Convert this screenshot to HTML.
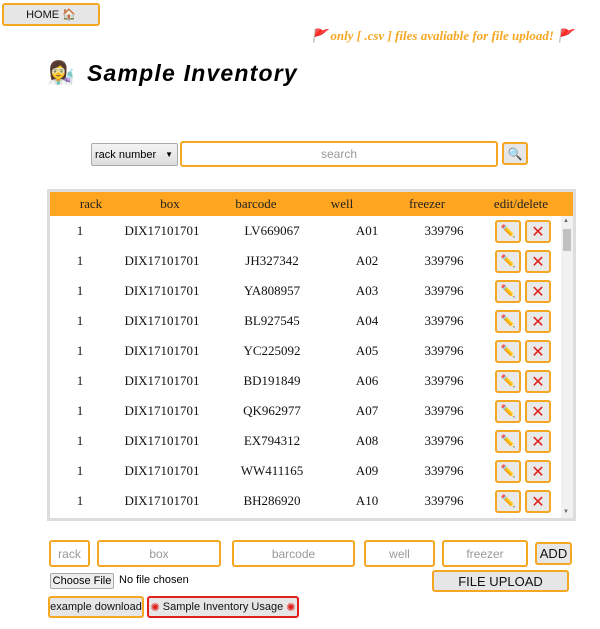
<!DOCTYPE html><html><head><style>
*{box-sizing:border-box}body{margin:0;width:600px;height:629px;background:#fff;font-family:"Liberation Sans",sans-serif;position:relative;overflow:hidden}
.a{position:absolute}
.btn{position:absolute;background:#e6e6e6;border:2px solid #f5a623;border-radius:3px;font-size:12px;display:flex;align-items:center;justify-content:center;color:#111;white-space:nowrap}
.inp{position:absolute;border:2px solid #f5a623;border-radius:3px;color:#999;font-size:12px;display:flex;align-items:center;justify-content:center;background:#fff}
.r{position:absolute;left:0;width:511px;height:30px;font-family:"Liberation Serif",serif;font-size:13px;color:#111}
.r span{position:absolute;top:50%;transform:translate(-50%,-50%);white-space:nowrap}
.h{height:24px;color:#222}
.e,.d{position:absolute;top:4px;width:26px;height:23px;border:2px solid #f5a623;border-radius:3px;background:#e9e9e9;font-size:12px;text-align:center;line-height:19px}
.d{color:#e0201a;font-weight:bold;font-family:"DejaVu Sans",sans-serif;font-size:16px}
</style></head><body>
<div class="btn" style="left:2px;top:3px;width:98px;height:23px;font-size:11px">HOME 🏠</div>
<div class="a" style="left:311px;top:28px;font-family:'Liberation Serif',serif;font-style:italic;font-weight:bold;color:#f5a623;font-size:13px">🚩 only [ .csv ] files avaliable for file upload! 🚩</div>
<div class="a" style="left:47px;top:60px;font-size:22px">👩‍🔬</div>
<div class="a" style="left:87px;top:60px;font-size:23px;font-weight:bold;font-style:italic;letter-spacing:1.2px">Sample Inventory</div>
<div class="a" style="left:91px;top:143px;width:87px;height:23px;border:1px solid #aaa;border-radius:2px;background:linear-gradient(#f4f4f4,#ddd);font-size:11px;padding:5px 3px">rack number<span style="position:absolute;right:4px;font-size:8px;top:6px">▼</span></div>
<div class="inp" style="left:180px;top:141px;width:318px;height:26px">search</div>
<div class="btn" style="left:502px;top:142px;width:26px;height:23px">🔍</div>
<div class="a" style="left:47px;top:189px;width:529px;height:332px;border:3px solid #ddd;overflow:hidden">
<div class="a" style="left:0;top:0;width:523px;height:24px;background:#ffa51f"></div>
<div class="r h" style="top:0"><span style="left:41px">rack</span><span style="left:120px">box</span><span style="left:206px">barcode</span><span style="left:292px">well</span><span style="left:377px">freezer</span><span style="left:471px">edit/delete</span></div>
<div id="rows"></div>
<div class="a" style="left:511px;top:24px;width:12px;height:302px;background:#f1f1f1"></div>
<div class="a" style="left:513px;top:37px;width:8px;height:22px;background:#c1c1c1"></div>
<div class="a" style="left:513px;top:26px;font-size:6px;color:#666">▲</div>
<div class="a" style="left:513px;top:317px;font-size:6px;color:#666">▼</div>
</div>
<div class="inp" style="left:49px;top:540px;width:41px;height:27px">rack</div>
<div class="inp" style="left:97px;top:540px;width:124px;height:27px">box</div>
<div class="inp" style="left:232px;top:540px;width:123px;height:27px">barcode</div>
<div class="inp" style="left:364px;top:540px;width:71px;height:27px">well</div>
<div class="inp" style="left:442px;top:540px;width:86px;height:27px">freezer</div>
<div class="btn" style="left:535px;top:542px;width:37px;height:23px;font-size:13px">ADD</div>
<div class="a" style="left:50px;top:573px;width:64px;height:16px;border:1px solid #aaa;border-radius:2px;background:#eee;font-size:11px;text-align:center;line-height:14px">Choose File</div>
<div class="a" style="left:119px;top:574px;font-size:11px">No file chosen</div>
<div class="btn" style="left:432px;top:570px;width:137px;height:22px;font-size:13px">FILE UPLOAD</div>
<div class="btn" style="left:48px;top:596px;width:96px;height:22px;font-size:11px">example download</div>
<div class="btn" style="left:147px;top:596px;width:152px;height:22px;font-size:11px;border-color:#e0201a"><span style="color:#e0201a">✺</span>&nbsp;Sample Inventory Usage&nbsp;<span style="color:#e0201a">✺</span></div>
<script>
var d=[["LV669067","A01"],["JH327342","A02"],["YA808957","A03"],["BL927545","A04"],["YC225092","A05"],["BD191849","A06"],["QK962977","A07"],["EX794312","A08"],["WW411165","A09"],["BH286920","A10"]];
var h="";d.forEach(function(x,i){h+='<div class="r" style="top:'+(24+i*30)+'px"><span style="left:30px">1</span><span style="left:112px">DIX17101701</span><span style="left:222px">'+x[0]+'</span><span style="left:317px">'+x[1]+'</span><span style="left:394px">339796</span><div class="e" style="left:445px">✏️</div><div class="d" style="left:475px">✕</div></div>';});
document.getElementById("rows").innerHTML=h;
</script>
</body></html>
